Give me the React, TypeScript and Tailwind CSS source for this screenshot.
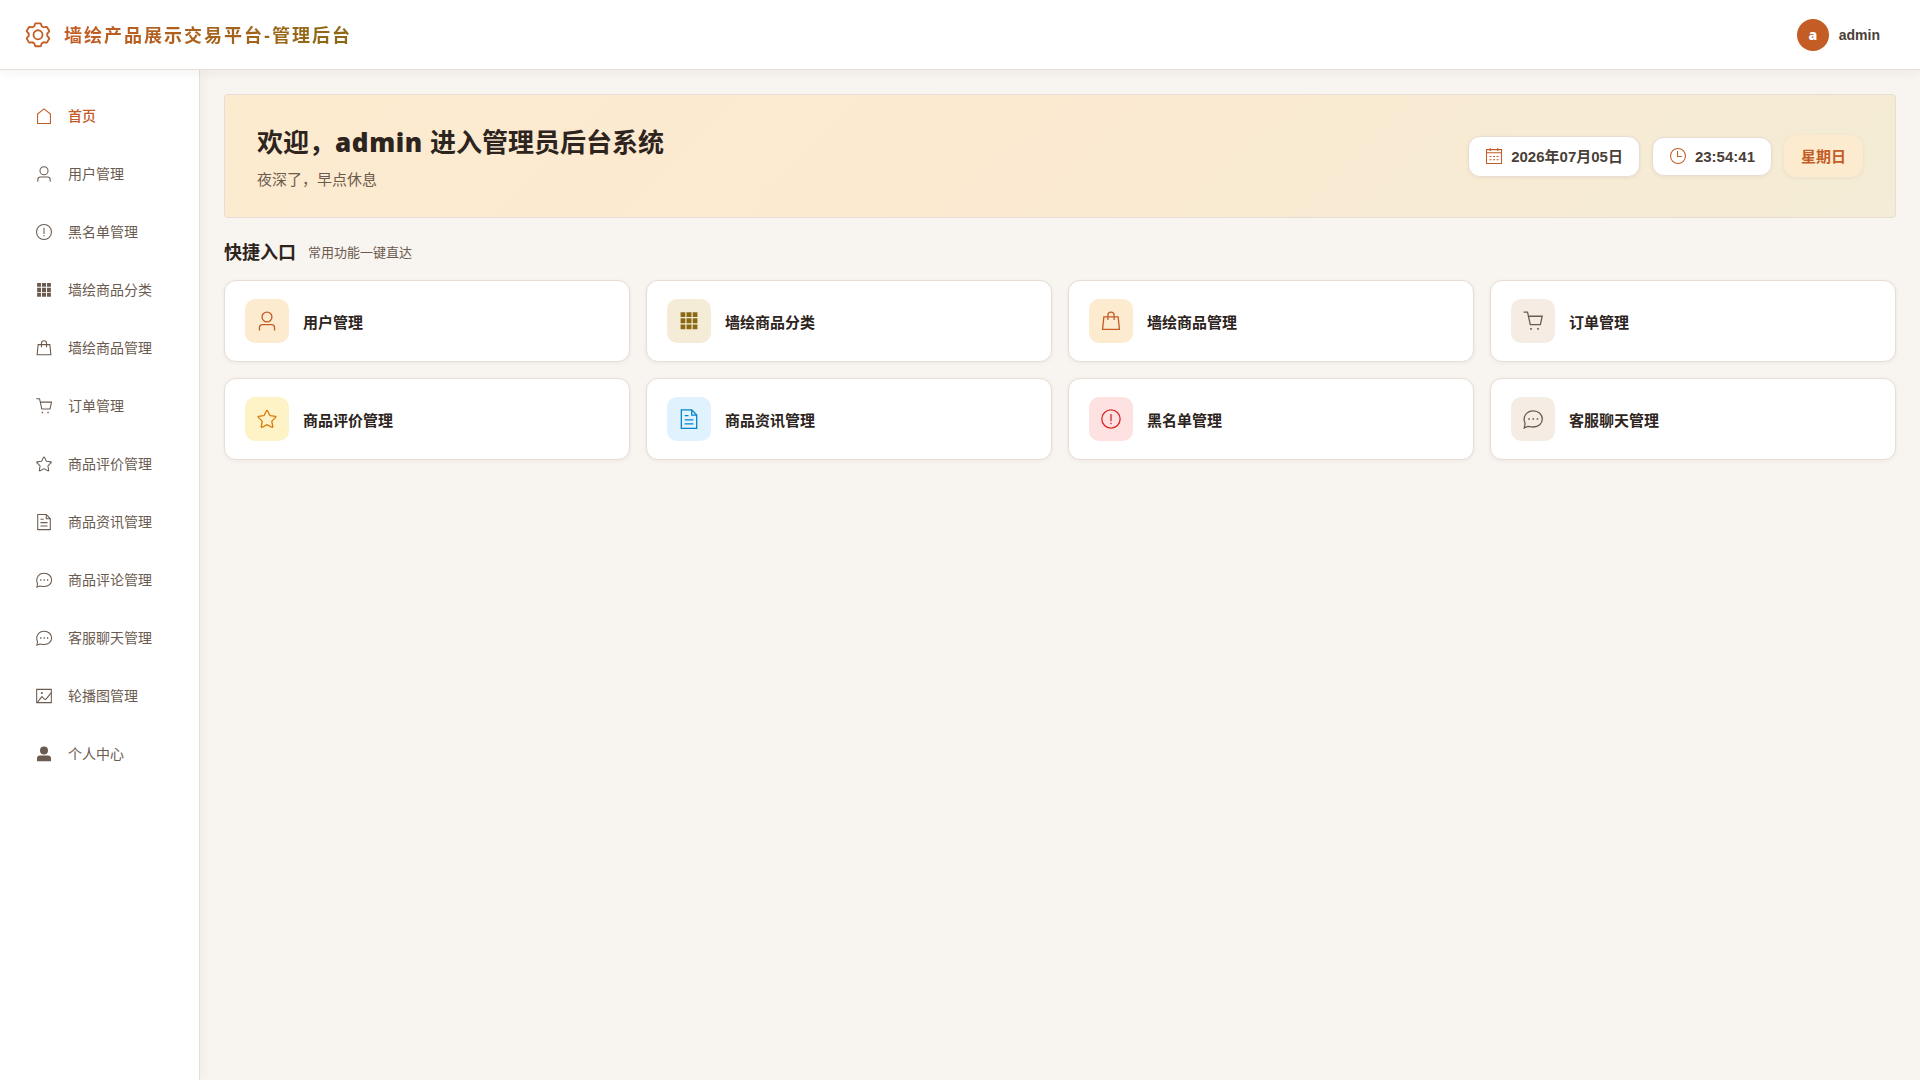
import React, { ReactNode } from 'react';

type IconName =
  | 'setting'
  | 'home'
  | 'user'
  | 'warning'
  | 'grid'
  | 'bag'
  | 'cart'
  | 'star'
  | 'document'
  | 'chat'
  | 'picture'
  | 'userSolid'
  | 'date'
  | 'time';

// all shapes are drawn on a 1024 grid
const shapes: Record<IconName, ReactNode> = {
  setting: (
    <>
      <path
        strokeWidth="66"
        d="M430 85h164q20 0 26 20l28 88q40 18 70 40l96-20q20-4 30 13l76 132q10 17-4 32l-66 73q4 41 0 82l66 73q14 15 4 32l-76 132q-10 17-30 13l-96-20q-30 22-70 40l-28 88q-6 20-26 20H430q-20 0-26-20l-28-88q-40-18-70-40l-96 20q-20 4-30-13l-76-132q-10-17 4-32l66-73q-4-41 0-82l-66-73q-14-15-4-32l76-132q10-17 30-13l96 20q30-22 70-40l28-88q6-20 26-20z"
      />
      <circle cx="512" cy="504" r="165" strokeWidth="66" />
    </>
  ),
  home: <path d="M512 110L145 400V935H879V400Z" />,
  user: (
    <>
      <circle cx="512" cy="325" r="230" />
      <path d="M160 950V830Q160 685 305 685H719Q864 685 864 830V950" />
    </>
  ),
  warning: (
    <>
      <circle cx="512" cy="512" r="425" />
      <path d="M512 275V620M512 685V760" />
    </>
  ),
  grid: (
    <path
      fill="currentColor"
      stroke="none"
      d="M120 110h220v220H120zM395 110h234v220H395zM684 110h220v220H684zM120 385h220v234H120zM395 385h234v234H395zM684 385h220v234H684zM120 674h220v220H120zM395 674h234v220H395zM684 674h220v220H684z"
    />
  ),
  bag: (
    <>
      <path d="M180 320H844L905 900H119Z" />
      <path d="M368 470V245a144 144 0 0 1 288 0V470" />
    </>
  ),
  cart: (
    <>
      <path d="M75 95H258L385 680H855L940 290H300" />
      <path d="M385 880h75M705 880h75" strokeWidth="75" />
    </>
  ),
  star: (
    <path
      strokeLinejoin="round"
      d="M485 130Q512 90 539 130L640 335Q650 352 670 356L905 390Q945 402 916 436L748 600Q735 614 738 634L780 868Q780 915 738 897L530 788Q512 780 494 788L286 897Q244 915 244 868L286 634Q289 614 276 600L108 436Q79 402 119 390L354 356Q374 352 384 335Z"
    />
  ),
  document: (
    <>
      <path d="M155 85H640L870 330V945H155Z" />
      <path d="M640 85V330H870M310 350H490M310 548H714M310 735H714" />
    </>
  ),
  chat: (
    <>
      <path d="M105 925L145 725C10 420 200 130 525 130C770 130 945 300 945 512C945 730 770 885 525 885C430 885 340 865 270 860Z" />
      <path d="M290 512h75M487 512h75M680 512h75" strokeWidth="75" />
    </>
  ),
  picture: (
    <>
      <path d="M95 135H929V889H95Z" />
      <path d="M130 880L390 545L555 700Q600 730 640 680L915 330" />
      <circle cx="390" cy="345" r="60" fill="currentColor" stroke="none" />
    </>
  ),
  userSolid: (
    <path
      fill="currentColor"
      stroke="none"
      d="M512 85a228 228 0 1 1 0 456 228 228 0 0 1 0-456zM114 920V770Q114 600 284 600H740Q910 600 910 770V920Z"
    />
  ),
  date: (
    <>
      <path d="M85 150H939V940H85ZM85 330H939" />
      <path d="M300 60V225M725 60V225" />
      <path d="M255 535h115M455 535h115M655 535h115M255 720h115M455 720h115M655 720h115" />
    </>
  ),
  time: (
    <>
      <circle cx="512" cy="512" r="425" />
      <path d="M485 230V535H735" />
    </>
  ),
};

function Icon({ name, className }: { name: IconName; className: string }) {
  return (
    <svg className={`shrink-0 ${className}`} viewBox="0 0 1024 1024" fill="none" stroke="currentColor" strokeWidth="60">
      {shapes[name]}
    </svg>
  );
}

const menu: { label: string; icon: IconName }[] = [
  { label: '首页', icon: 'home' },
  { label: '用户管理', icon: 'user' },
  { label: '黑名单管理', icon: 'warning' },
  { label: '墙绘商品分类', icon: 'grid' },
  { label: '墙绘商品管理', icon: 'bag' },
  { label: '订单管理', icon: 'cart' },
  { label: '商品评价管理', icon: 'star' },
  { label: '商品资讯管理', icon: 'document' },
  { label: '商品评论管理', icon: 'chat' },
  { label: '客服聊天管理', icon: 'chat' },
  { label: '轮播图管理', icon: 'picture' },
  { label: '个人中心', icon: 'userSolid' },
];

const shortcuts: { label: string; icon: IconName; tone: string }[] = [
  { label: '用户管理', icon: 'user', tone: 'bg-[#fdebd0] text-[#c45c26]' },
  { label: '墙绘商品分类', icon: 'grid', tone: 'bg-[#f5ecd7] text-[#8b6914]' },
  { label: '墙绘商品管理', icon: 'bag', tone: 'bg-[#fdebd0] text-[#c45c26]' },
  { label: '订单管理', icon: 'cart', tone: 'bg-[#f5ede4] text-[#6b5b4f]' },
  { label: '商品评价管理', icon: 'star', tone: 'bg-[#fef3c7] text-[#d97706]' },
  { label: '商品资讯管理', icon: 'document', tone: 'bg-[#e0f2fe] text-[#0284c7]' },
  { label: '黑名单管理', icon: 'warning', tone: 'bg-[#fee2e2] text-[#dc2626]' },
  { label: '客服聊天管理', icon: 'chat', tone: 'bg-[#f5ede4] text-[#6b5b4f]' },
];

function Header() {
  return (
    <header className="relative z-10 flex h-[70px] items-center justify-between border-b border-[#e8ddd4] bg-white pr-10 pl-6 shadow-[0_2px_12px_rgba(45,36,32,0.06)]">
      <div className="flex items-center gap-3">
        <Icon name="setting" className="size-7 text-[#c45c26]" />
        <h1 className="bg-[linear-gradient(90deg,#c45c26,#8b6914)] bg-clip-text pt-1 text-[18px] font-bold tracking-[2px] text-transparent">
          墙绘产品展示交易平台-管理后台
        </h1>
      </div>
      <div className="flex items-center gap-2.5">
        <span className="flex size-8 items-center justify-center rounded-full bg-[#c45c26] font-['Open_Sans'] text-sm font-extrabold text-white">
          a
        </span>
        <span className="text-sm font-bold text-[#4a3f38]">admin</span>
      </div>
    </header>
  );
}

function Sidebar() {
  return (
    <aside className="w-[200px] shrink-0 border-r border-[#e8ddd4] bg-white pt-[21px] shadow-[2px_0_12px_rgba(45,36,32,0.04)]">
      <nav className="flex flex-col gap-2">
        {menu.map((item, i) => (
          <a
            key={item.label}
            className={`flex h-[50px] items-center gap-[15px] pl-[35px] text-sm ${i === 0 ? 'font-medium text-[#c45c26]' : 'text-[#6b5b4f]'}`}
          >
            <Icon name={item.icon} className="size-[18px]" />
            <span>{item.label}</span>
          </a>
        ))}
      </nav>
    </aside>
  );
}

function Banner() {
  const pill = 'flex items-center gap-2 rounded-xl border px-4 text-[15px] font-bold shadow-[0_1px_4px_rgba(45,36,32,0.06)]';
  return (
    <section className="flex h-[124px] items-center justify-between rounded border border-[#e8ddd4] bg-[linear-gradient(135deg,#fdebd0_0%,#fbead1_50%,#f4ecd6_100%)] px-8">
      <div className="pt-[5px]">
        <h2 className="text-[26px] leading-[34px] font-bold whitespace-nowrap text-[#2d2420]">
          欢迎，<span className="font-['Open_Sans'] font-extrabold tracking-[0.6px]">admin</span> 进入管理员后台系统
        </h2>
        <p className="mt-2 text-[15px] leading-6 text-[#6b5b4f]">夜深了，早点休息</p>
      </div>
      <div className="flex items-center gap-3">
        <div className={`${pill} h-[41px] border-[#e8ddd4] bg-white text-[#4a3f38]`}>
          <Icon name="date" className="size-[18px] text-[#c45c26]" />
          <span className="pt-0.5">2026年07月05日</span>
        </div>
        <div className={`${pill} h-[39px] border-[#e8ddd4] bg-white text-[#4a3f38]`}>
          <Icon name="time" className="size-[18px] text-[#c45c26]" />
          <span className="pt-0.5">23:54:41</span>
        </div>
        <div className={`${pill} h-[42px] border-[#fdebd0] bg-[#fdebd0] text-[#c45c26]`}>
          <span className="pt-0.5">星期日</span>
        </div>
      </div>
    </section>
  );
}

export default function App() {
  return (
    <div className="flex h-screen flex-col bg-[#f8f4ef] font-['Liberation_Sans','Noto_Sans_CJK_SC',sans-serif]">
      <Header />
      <div className="flex min-h-0 flex-1">
        <Sidebar />
        <main className="min-w-0 flex-1 p-6">
          <Banner />
          <div className="mt-5 mb-[14px] flex h-7 items-center gap-3">
            <h3 className="pt-0.5 text-[18px] font-bold text-[#2d2420]">快捷入口</h3>
            <span className="pt-0.5 text-[13px] text-[#6b5b4f]">常用功能一键直达</span>
          </div>
          <div className="grid grid-cols-4 gap-4">
            {shortcuts.map((item) => (
              <div
                key={item.label}
                className="flex h-[82px] items-center gap-3.5 rounded-xl border border-[#e8ddd4] bg-white px-5 shadow-[0_1px_4px_rgba(45,36,32,0.06)]"
              >
                <span className={`flex size-11 items-center justify-center rounded-[10px] ${item.tone}`}>
                  <Icon name={item.icon} className="size-[22px]" />
                </span>
                <span className="pt-1 text-[15px] font-bold text-[#2d2420]">{item.label}</span>
              </div>
            ))}
          </div>
        </main>
      </div>
    </div>
  );
}
